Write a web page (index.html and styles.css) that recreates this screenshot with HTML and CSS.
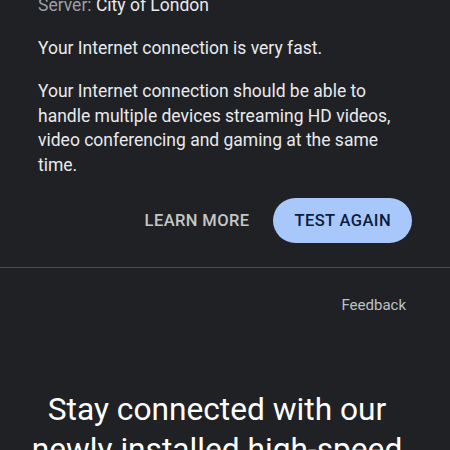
FILE: index.html
```html
<!DOCTYPE html>
<html lang="en">
<head>
  <meta charset="UTF-8" />
  <meta name="viewport" content="width=device-width, initial-scale=1.0"/>
  <title>Internet speed test</title>
  <link rel="stylesheet" href="styles.css">
</head>
<body>
  <div class="result">
    <p class="server"><span class="muted">Server:</span> City of London</p>
    <p class="summary">Your Internet connection is very fast.</p>
    <p class="detail">Your Internet connection should be able to handle multiple devices streaming HD videos, video conferencing and gaming at the same time.</p>
    <div class="actions">
      <button class="btn text">LEARN MORE</button>
      <button class="btn filled">TEST AGAIN</button>
    </div>
  </div>

  <div class="feedback">
    <a href="#">Feedback</a>
  </div>

  <div class="promo">
    <h1>Stay connected with our newly installed high-speed internet</h1>
  </div>
</body>
</html>
```

FILE: styles.css
```css
body {
  margin: 0;
  background: #202124;
  color: #e8eaed;
  font-family: Roboto, "Noto Sans", Arial, sans-serif;
  overflow: hidden;
}
.result {
  padding: 0 38px 24px;
  border-bottom: 1px solid #4a4c4f;
}
.result p {
  margin: 0;
  font-size: 17.5px;
  line-height: 24.5px;
}
.server {
  margin-top: -7px !important;
}
.muted {
  color: #9aa0a6;
}
.summary {
  margin-top: 18px !important;
}
.detail {
  margin-top: 19px !important;
}
.actions {
  display: flex;
  justify-content: flex-end;
  align-items: center;
  gap: 8px;
  margin-top: 21px;
}
.btn {
  font-family: inherit;
  font-size: 16.5px;
  font-weight: 500;
  letter-spacing: 0.4px;
  border: none;
  height: 45px;
  border-radius: 23px;
  padding: 0 21px;
  cursor: pointer;
}
.btn.text {
  background: none;
  color: #c4c7c5;
  padding: 0 16px;
}
.btn.filled {
  background: #a8c7fa;
  color: #0b1d3a;
}
.feedback {
  display: flex;
  justify-content: flex-end;
  padding: 27px 44px 0;
}
.feedback a {
  color: #bdc1c6;
  text-decoration: none;
  font-size: 15px;
  line-height: 20px;
}
.promo {
  padding: 75px 40px 0 24px;
  text-align: center;
}
.promo h1 {
  margin: 0;
  font-size: 31.7px;
  font-weight: 400;
  line-height: 40px;
  color: #ffffff;
}
```
